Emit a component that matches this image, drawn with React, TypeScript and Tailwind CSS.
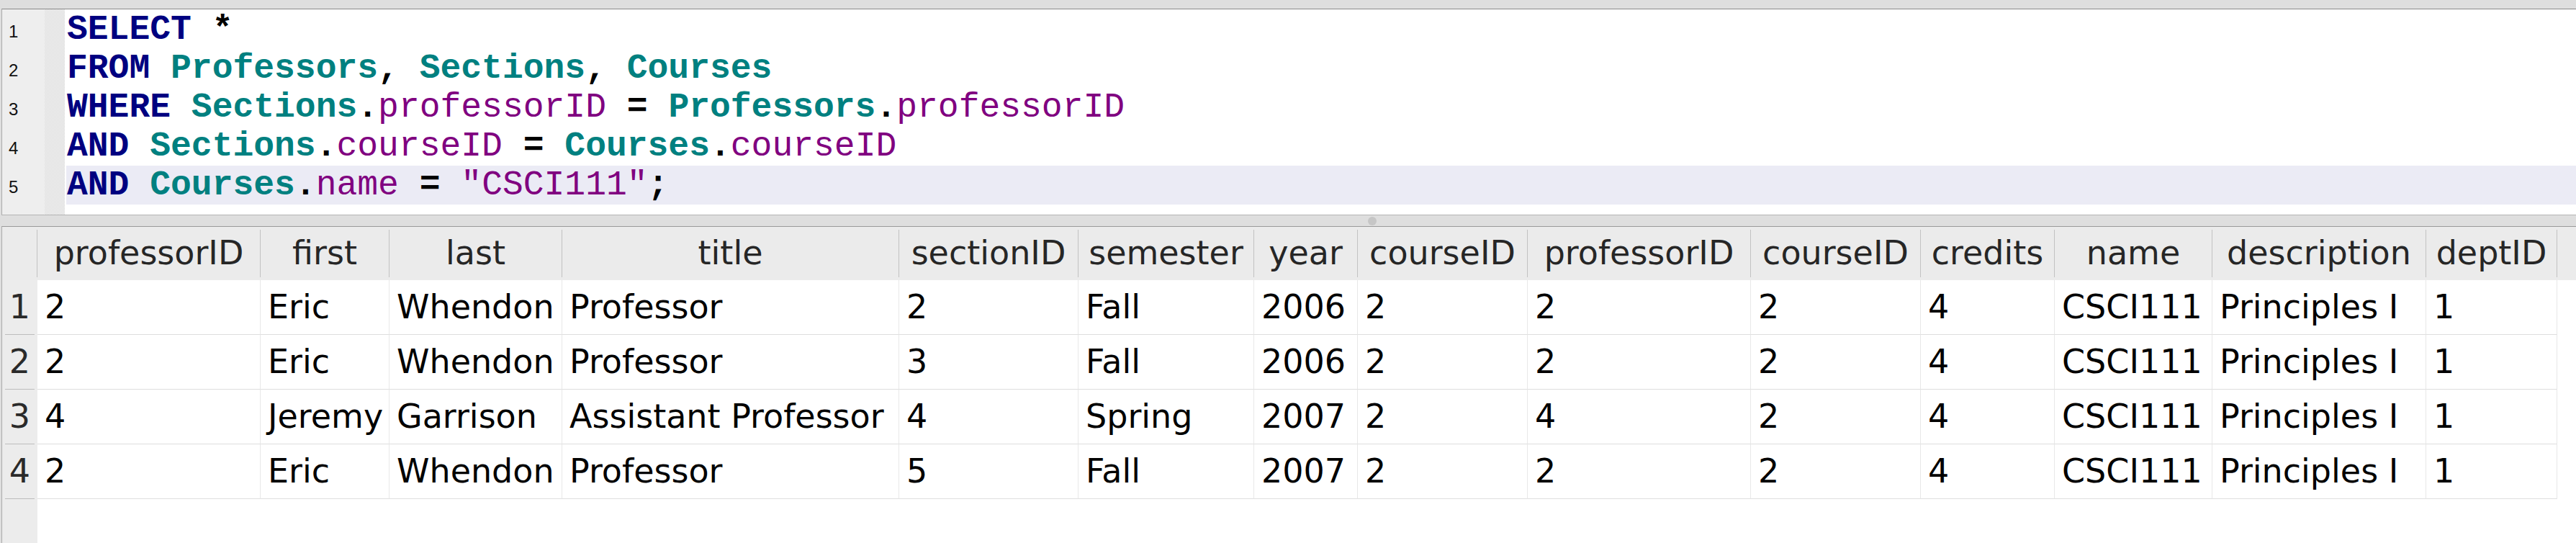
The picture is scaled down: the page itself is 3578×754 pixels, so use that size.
const code: { t: string; c: string }[][] = [
  [
    { t: 'SELECT', c: 'kw' },
    { t: ' *', c: 'op' },
  ],
  [
    { t: 'FROM', c: 'kw' },
    { t: ' ', c: 'op' },
    { t: 'Professors', c: 'tb' },
    { t: ', ', c: 'op' },
    { t: 'Sections', c: 'tb' },
    { t: ', ', c: 'op' },
    { t: 'Courses', c: 'tb' },
  ],
  [
    { t: 'WHERE', c: 'kw' },
    { t: ' ', c: 'op' },
    { t: 'Sections', c: 'tb' },
    { t: '.', c: 'op' },
    { t: 'professorID', c: 'col' },
    { t: ' = ', c: 'op' },
    { t: 'Professors', c: 'tb' },
    { t: '.', c: 'op' },
    { t: 'professorID', c: 'col' },
  ],
  [
    { t: 'AND', c: 'kw' },
    { t: ' ', c: 'op' },
    { t: 'Sections', c: 'tb' },
    { t: '.', c: 'op' },
    { t: 'courseID', c: 'col' },
    { t: ' = ', c: 'op' },
    { t: 'Courses', c: 'tb' },
    { t: '.', c: 'op' },
    { t: 'courseID', c: 'col' },
  ],
  [
    { t: 'AND', c: 'kw' },
    { t: ' ', c: 'op' },
    { t: 'Courses', c: 'tb' },
    { t: '.', c: 'op' },
    { t: 'name', c: 'col' },
    { t: ' = ', c: 'op' },
    { t: '"CSCI111"', c: 'col' },
    { t: ';', c: 'op' },
  ],
]

const tokenClass: Record<string, string> = {
  kw: 'text-[#000080] font-bold',
  tb: 'text-[#008080] font-bold',
  col: 'text-[#800080]',
  op: 'text-black font-bold',
}

const columns = [
  { name: 'professorID', w: 'w-[310px]' },
  { name: 'first', w: 'w-[179px]' },
  { name: 'last', w: 'w-[240px]' },
  { name: 'title', w: 'w-[468px]' },
  { name: 'sectionID', w: 'w-[249px]' },
  { name: 'semester', w: 'w-[244px]' },
  { name: 'year', w: 'w-[144px]' },
  { name: 'courseID', w: 'w-[236px]' },
  { name: 'professorID', w: 'w-[310px]' },
  { name: 'courseID', w: 'w-[236px]' },
  { name: 'credits', w: 'w-[186px]' },
  { name: 'name', w: 'w-[219px]' },
  { name: 'description', w: 'w-[297px]' },
  { name: 'deptID', w: 'w-[182px]' },
]

const rows = [
  ['2', 'Eric', 'Whendon', 'Professor', '2', 'Fall', '2006', '2', '2', '2', '4', 'CSCI111', 'Principles I', '1'],
  ['2', 'Eric', 'Whendon', 'Professor', '3', 'Fall', '2006', '2', '2', '2', '4', 'CSCI111', 'Principles I', '1'],
  ['4', 'Jeremy', 'Garrison', 'Assistant Professor', '4', 'Spring', '2007', '2', '4', '2', '4', 'CSCI111', 'Principles I', '1'],
  ['2', 'Eric', 'Whendon', 'Professor', '5', 'Fall', '2007', '2', '2', '2', '4', 'CSCI111', 'Principles I', '1'],
]

function Editor() {
  return (
    <div className="h-[287px] bg-white border-t border-l border-b border-t-[#8a8a8a] border-l-[#ababab] border-b-[#b4b4b4] flex">
      <div className="w-[59px] bg-[#eeeeee] pt-[1px] font-['Liberation_Sans',sans-serif] text-[24px] text-[#111]">
        {code.map((_, i) => (
          <div key={i} className="h-[54px] flex items-center pl-[9px] pt-[6px]">
            {i + 1}
          </div>
        ))}
      </div>
      <div className="w-[28px] bg-[repeating-conic-gradient(#d9d9d9_0_25%,#f6f6f6_0_50%)] bg-[length:2px_2px]" />
      <div className="flex-1 pl-[2px] pt-[1px] font-['Liberation_Mono',monospace] text-[48px] leading-[54px]">
        {code.map((line, i) => (
          <div key={i} className={`h-[54px] whitespace-pre pl-[1px] ${i === 4 ? 'bg-[#ebebf5]' : ''}`}>
            {line.map((tok, j) => (
              <span key={j} className={tokenClass[tok.c]}>
                {tok.t}
              </span>
            ))}
          </div>
        ))}
      </div>
    </div>
  )
}

function ResultGrid() {
  return (
    <div className="flex-1 flex flex-col bg-white border-t border-l border-t-[#9a9a9a] border-l-[#ababab] font-['DejaVu_Sans',sans-serif] text-[46px]">
      <div className="h-[74px] flex bg-[#ebebeb] text-[#262626]">
        <div className="w-[49px] flex">
          <div className="flex-1 my-[4px] border-r border-[#c2c2c2]" />
        </div>
        {columns.map((c, i) => (
          <div key={i} className={`${c.w} flex`}>
            <div className="flex-1 my-[4px] border-r border-[#c2c2c2] flex items-center justify-center pb-[2px] whitespace-nowrap">
              {c.name}
            </div>
          </div>
        ))}
      </div>
      {rows.map((r, i) => (
        <div key={i} className="h-[76px] flex">
          <div className="w-[49px] bg-[#ececec] px-[4px] flex">
            <div className="flex-1 border-b border-[#bdbdbd] flex items-center justify-center text-[#2a2a2a]">
              {i + 1}
            </div>
          </div>
          {r.map((v, j) => (
            <div
              key={j}
              className={`${columns[j].w} border-r border-b border-r-[#e8e8e8] border-b-[#dedede] flex items-center pl-[10px] text-black whitespace-nowrap`}
            >
              {v}
            </div>
          ))}
        </div>
      ))}
      <div className="flex-1 flex">
        <div className="w-[49px] bg-[#ececec]" />
      </div>
    </div>
  )
}

export default function App() {
  return (
    <div className="w-[3578px] h-[754px] bg-[#dedede] pt-[12px] pl-[2px] flex flex-col overflow-hidden">
      <Editor />
      <div className="h-[15px] flex justify-center items-center pl-[232px]">
        <div className="w-[12px] h-[12px] rounded-full bg-[#c6c6c6]" />
      </div>
      <ResultGrid />
    </div>
  )
}
